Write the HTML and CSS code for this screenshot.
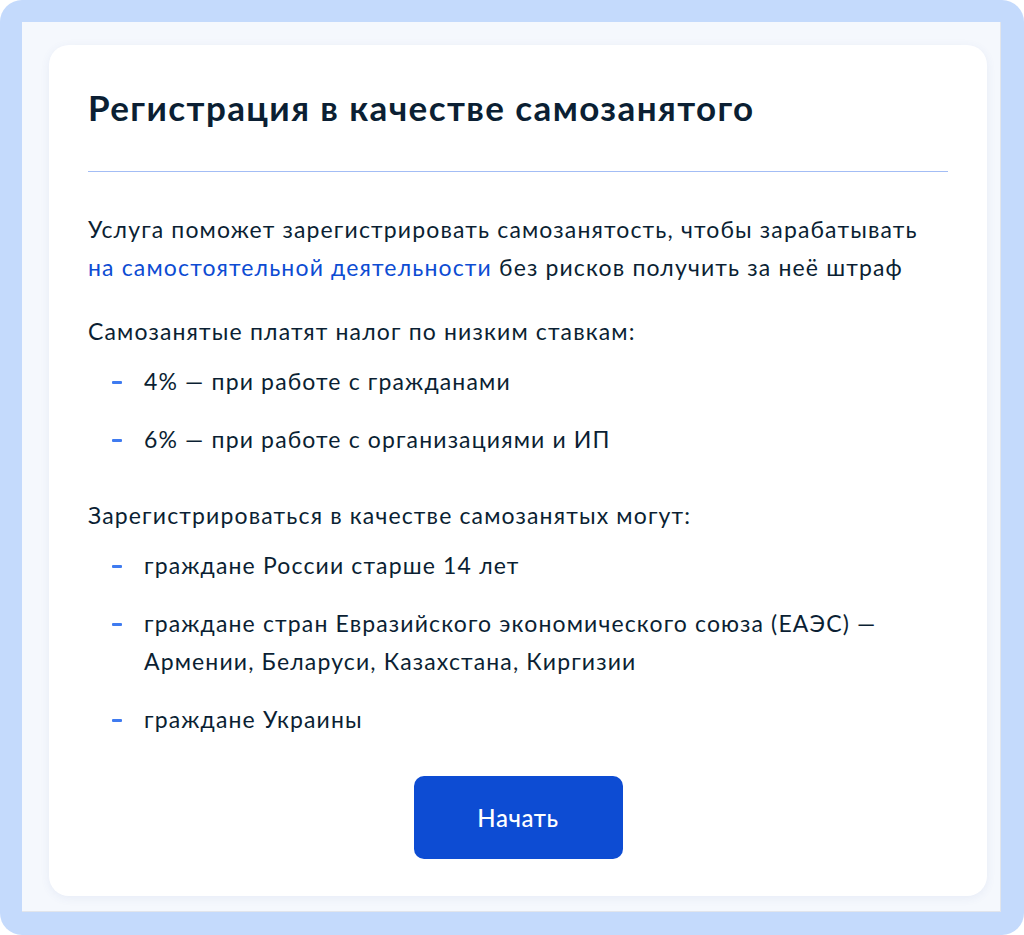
FILE: index.html
```html
<!DOCTYPE html>
<html lang="ru">
<head>
<meta charset="utf-8">
<title>Регистрация в качестве самозанятого</title>
<link rel="stylesheet" href="styles.css">
</head>
<body>
<div class="frame">
  <div class="panel">
    <section class="card">
      <h1 class="card-title">Регистрация в качестве самозанятого</h1>
      <div class="divider"></div>
      <p class="text text-intro">Услуга поможет зарегистрировать самозанятость, чтобы зарабатывать <a class="link" href="#">на&nbsp;самостоятельной деятельности</a> без рисков получить за неё штраф</p>
      <p class="text text-lead">Самозанятые платят налог по низким ставкам:</p>
      <ul class="dash-list">
        <li class="dash-item">4% — при работе с гражданами</li>
        <li class="dash-item">6% — при работе с организациями и ИП</li>
      </ul>
      <p class="text text-lead">Зарегистрироваться в качестве самозанятых могут:</p>
      <ul class="dash-list">
        <li class="dash-item">граждане России старше 14 лет</li>
        <li class="dash-item">граждане стран Евразийского экономического союза (ЕАЭС) —<br>Армении, Беларуси, Казахстана, Киргизии</li>
        <li class="dash-item">граждане Украины</li>
      </ul>
      <div class="actions">
        <button class="btn-primary" type="button">Начать</button>
      </div>
    </section>
  </div>
</div>
</body>
</html>
```

FILE: styles.css
```css
* {
  box-sizing: border-box;
}

html,
body {
  margin: 0;
  padding: 0;
  background: #ffffff;
}

body {
  font-family: Lato, "Noto Sans", sans-serif;
  color: #0b1f33;
}

.frame {
  height: 935px;
  background: #c4dafc;
  border-radius: 22px;
  padding: 22px 23px 23px 22px;
  display: flex;
  flex-direction: column;
}

.panel {
  flex: 1;
  background: #f5f8fd;
  border-right: 1px solid #e2e5eb;
  border-bottom: 1px solid #e2e5eb;
  padding: 23px 13px 14px 27px;
}

.card {
  background: #ffffff;
  border-radius: 20px;
  box-shadow: 0 2px 10px rgba(58, 93, 160, 0.08);
  padding: 42px 39px 37px 39px;
}

.card-title {
  margin: 0;
  font-size: 35px;
  line-height: 40px;
  font-weight: 700;
  letter-spacing: 1.4px;
}

.divider {
  margin-top: 44px;
  height: 1px;
  background: #a3bdf5;
}

.text {
  margin: 0;
  font-size: 23px;
  line-height: 38px;
  letter-spacing: 1.15px;
}

.text-intro {
  margin-top: 38px;
}

.text-lead {
  margin-top: 26px;
}

.dash-list + .text-lead {
  margin-top: 38px;
}

.link {
  color: #0d4cd3;
  text-decoration: none;
}

.dash-list {
  list-style: none;
  margin: 12px 0 0;
  padding: 0;
}

.dash-item {
  position: relative;
  padding-left: 56px;
  font-size: 23px;
  line-height: 38px;
  letter-spacing: 1.15px;
}

.dash-item + .dash-item {
  margin-top: 20px;
}

.dash-item::before {
  content: "";
  position: absolute;
  left: 24px;
  top: 19px;
  width: 10px;
  height: 3px;
  border-radius: 1px;
  background: #3f7bf0;
}

.actions {
  display: flex;
  justify-content: center;
  margin-top: 38px;
}

.btn-primary {
  width: 209px;
  height: 83px;
  border: 0;
  border-radius: 10px;
  background: #0d4cd3;
  color: #ffffff;
  font-family: Lato, "Noto Sans", sans-serif;
  font-size: 24px;
  font-weight: 500;
  letter-spacing: 0.6px;
  cursor: pointer;
}
```
